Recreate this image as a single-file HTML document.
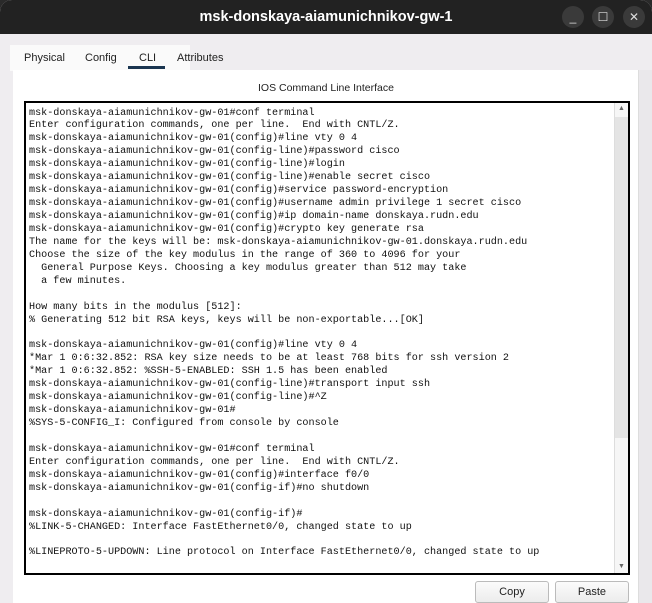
<!DOCTYPE html>
<html><head><meta charset="utf-8"><style>
*{margin:0;padding:0;box-sizing:border-box}
body{width:652px;height:603px;background:#2a2a2a;overflow:hidden;font-family:"Liberation Sans",sans-serif}
.win{position:absolute;left:0;top:0;width:652px;height:603px;background:#efedf0;border-radius:12px 12px 0 0;overflow:hidden}
.title{position:absolute;left:0;top:0;width:652px;height:34px;background:#222;color:#fff;font-size:14.5px;font-weight:bold;text-align:center;line-height:34px}
.btn{position:absolute;top:6px;width:22px;height:22px;border-radius:50%;background:#3a3a3a;color:#ddd;font-size:12px;text-align:center;line-height:22px}
.tabs{position:absolute;left:10px;top:45px;width:180px;height:26px;background:#fafafa}
.tab{position:absolute;top:52px;font-size:11px;color:#222}
.panel{position:absolute;left:13px;top:70px;width:626px;height:533px;background:#fff}
.hdr{position:absolute;left:0;top:82px;width:652px;text-align:center;font-size:10.5px;color:#222}
.term{position:absolute;left:24px;top:101px;width:606px;height:474px;border:2px solid #000;background:#fff;overflow:hidden}
pre{position:absolute;left:3px;top:4.5px;font-family:"Liberation Mono",monospace;font-size:10.15px;line-height:12.94px;color:#111}
.sb{position:absolute;right:0;top:0;width:14px;height:100%;background:#f6f6f6;border-left:1px solid #ddd}
.thumb{position:absolute;left:0;top:14px;width:13px;height:321px;background:#e4e4e4}
.b{position:absolute;top:581px;height:22px;border:1px solid #bbb;border-radius:3px;background:linear-gradient(#fbfbfb,#ececec);font-size:11px;text-align:center;line-height:20px;color:#222}
</style></head><body><div class="win">
<div class="title">msk-donskaya-aiamunichnikov-gw-1</div>
<div class="btn" style="left:562px">_</div>
<div class="btn" style="left:592px">☐</div>
<div class="btn" style="left:623px">✕</div>
<div style="position:absolute;left:0;top:34px;width:652px;height:569px;background:#efedf0"></div>
<div class="tabs"></div>
<div class="panel"></div>
<div style="position:absolute;left:638px;top:70px;width:14px;height:533px;background:#eae8eb;border-left:1px solid #ddd"></div>
<div class="tab" style="left:24px">Physical</div>
<div class="tab" style="left:85px">Config</div>
<div class="tab" style="left:139px">CLI</div>
<div style="position:absolute;left:128px;top:66px;width:37px;height:3px;background:#1a3550"></div>
<div class="tab" style="left:177px">Attributes</div>
<div class="hdr">IOS Command Line Interface</div>
<div class="term"><pre>msk-donskaya-aiamunichnikov-gw-01#conf terminal
Enter configuration commands, one per line.  End with CNTL/Z.
msk-donskaya-aiamunichnikov-gw-01(config)#line vty 0 4
msk-donskaya-aiamunichnikov-gw-01(config-line)#password cisco
msk-donskaya-aiamunichnikov-gw-01(config-line)#login
msk-donskaya-aiamunichnikov-gw-01(config-line)#enable secret cisco
msk-donskaya-aiamunichnikov-gw-01(config)#service password-encryption
msk-donskaya-aiamunichnikov-gw-01(config)#username admin privilege 1 secret cisco
msk-donskaya-aiamunichnikov-gw-01(config)#ip domain-name donskaya.rudn.edu
msk-donskaya-aiamunichnikov-gw-01(config)#crypto key generate rsa
The name for the keys will be: msk-donskaya-aiamunichnikov-gw-01.donskaya.rudn.edu
Choose the size of the key modulus in the range of 360 to 4096 for your
  General Purpose Keys. Choosing a key modulus greater than 512 may take
  a few minutes.

How many bits in the modulus [512]:
% Generating 512 bit RSA keys, keys will be non-exportable...[OK]

msk-donskaya-aiamunichnikov-gw-01(config)#line vty 0 4
*Mar 1 0:6:32.852: RSA key size needs to be at least 768 bits for ssh version 2
*Mar 1 0:6:32.852: %SSH-5-ENABLED: SSH 1.5 has been enabled
msk-donskaya-aiamunichnikov-gw-01(config-line)#transport input ssh
msk-donskaya-aiamunichnikov-gw-01(config-line)#^Z
msk-donskaya-aiamunichnikov-gw-01#
%SYS-5-CONFIG_I: Configured from console by console

msk-donskaya-aiamunichnikov-gw-01#conf terminal
Enter configuration commands, one per line.  End with CNTL/Z.
msk-donskaya-aiamunichnikov-gw-01(config)#interface f0/0
msk-donskaya-aiamunichnikov-gw-01(config-if)#no shutdown

msk-donskaya-aiamunichnikov-gw-01(config-if)#
%LINK-5-CHANGED: Interface FastEthernet0/0, changed state to up

%LINEPROTO-5-UPDOWN: Line protocol on Interface FastEthernet0/0, changed state to up</pre>
<div class="sb"><div style="text-align:center;font-size:7px;color:#666;line-height:12px">▲</div><div class="thumb"></div><div style="position:absolute;bottom:0;width:13px;text-align:center;font-size:7px;color:#666;line-height:12px">▼</div></div>
</div>
<div class="b" style="left:475px;width:74px">Copy</div>
<div class="b" style="left:555px;width:74px">Paste</div>
</div></body></html>
